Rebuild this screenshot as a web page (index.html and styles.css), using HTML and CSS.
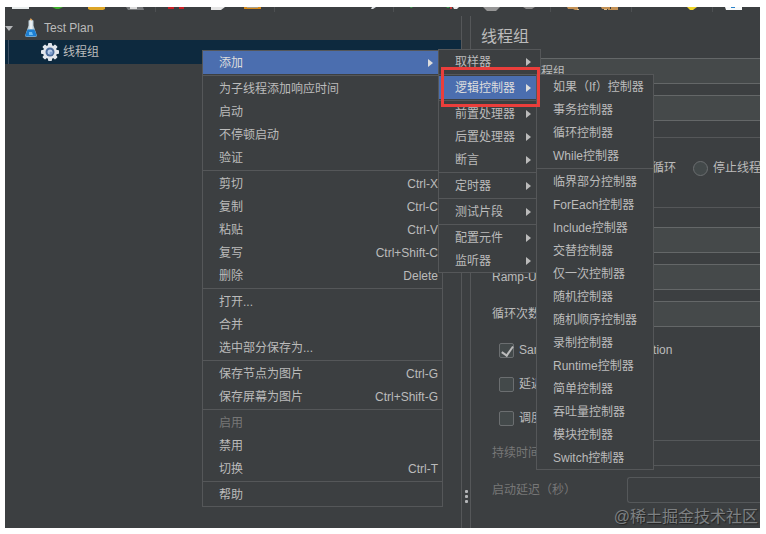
FILE: index.html
```html
<!DOCTYPE html>
<html lang="zh-CN">
<head>
    <meta charset="UTF-8">
    <meta name="viewport" content="width=device-width, initial-scale=1.0">
    <title>线程组</title>
    <link rel="stylesheet" href="styles.css">
</head>
<body>
    <div class="window">
        <!-- 工具栏 -->
        <div class="toolbar">
            <svg width="755" height="9" viewBox="5 7 755 9" aria-hidden="true">
                <path d="M12 7h17v2h-17z" fill="#e8ecec"/>
                <path d="M52 7h11l-4 2h-3z" fill="#3cae2a"/>
                <path d="M88 7h17v2l-2 1h-13l-2-1z" fill="#dda526"/>
                <path d="M126 7h17l1 3h-16z" fill="#77797b"/>
                <path d="M130 7h7v2h-7z" fill="#dcdcdc"/>
                <path d="M168 7h6v2h-6zM179 7h5v2h-5z" fill="#c81f25"/>
                <path d="M211 7h14l-4 3h-10z" fill="#e6e6e6"/>
                <path d="M244 7h17v2h-17z" fill="#d68b1c"/>
                <path d="M247 7h11v1h-11z" fill="#a9a08c"/>
                <path d="M372 7h4l-3 2h-2z" fill="#dfe3e5"/>
                <path d="M410 7h3l-2 1z" fill="#35b04a"/>
                <path d="M446 7h4l-2 1z" fill="#35b04a"/>
                <path d="M450 7h2v2h-2z" fill="#c43a3a"/>
                <path d="M453 7h6l-2 2h-3z" fill="#ececec"/>
                <path d="M483 7h17l-4 4h-9z" fill="#969696"/>
                <path d="M523 7h12l-3 2h-6z" fill="#8b8b8b"/>
                <path d="M567 7h11v3h-3l-2-1h-5zM601 7h9v2h-8zM611 7h7v3h-10v-1h3z" fill="#c39155"/>
                <path d="M577 9h2v1h-2zM604 9h3v1h-3z" fill="#e0bd85"/>
                <path d="M687 7h10l-4 3h-3z" fill="#efd528"/>
                <path d="M725 7h17v3h-16z" fill="#f8fafa"/>
                <path d="M731 7h4v1h-4z" fill="#2a82c9"/>
                <path d="M155 7h1v5h-1zM274 7h1v5h-1zM393 7h1v5h-1zM550 7h1v5h-1zM631 7h1v5h-1zM712 7h1v5h-1z" fill="#4d5052"/>
            </svg>
        </div>

        <div class="split">
            <!-- 测试计划树 -->
            <ul class="tree">
                <li class="tree-row">
                    <svg width="40" height="24" viewBox="0 0 40 24" aria-hidden="true">
                        <path d="M0 10h8l-4 5z" fill="#b4b6b8"/>
                        <path d="M23.500 4.500h5v5l3 9q1 2.500-2 2.500h-7q-3 0-2-2.500l3-9z" fill="#b9ccd6"/>
                        <path d="M24.500 4h3v9h-3z" fill="#e8eff2"/>
                        <path d="M22.500 13.500h7l2 5q.5 2-2 2h-7q-2.500 0-2-2z" fill="#1d7fd2"/>
                        <path d="M24 16h3l1 3h-4z" fill="#6cbcf2"/>
                        <path d="M25 3l2 1" stroke="#d9a05a" stroke-width="1.500"/>
                    </svg>
                    <span>Test Plan</span>
                </li>
                <li class="tree-row selected">
                    <svg class="gear" width="20" height="20" viewBox="-10 -10 20 20" aria-hidden="true">
                        <g fill="#e2e6ec">
                            <rect x="-2" y="-9" width="4" height="18" rx="1"/>
                            <rect x="-2" y="-9" width="4" height="18" rx="1" transform="rotate(45)"/>
                            <rect x="-2" y="-9" width="4" height="18" rx="1" transform="rotate(90)"/>
                            <rect x="-2" y="-9" width="4" height="18" rx="1" transform="rotate(135)"/>
                            <circle r="7"/>
                        </g>
                        <circle r="4.500" fill="#4c6d9c"/>
                        <circle r="2.500" fill="#b9cdea"/>
                        <circle cx="1" cy="1" r="1.500" fill="#7f9fd0"/>
                    </svg>
                    <span>线程组</span>
                </li>
            </ul>

            <div class="divider"><i></i><i></i><i></i></div>

            <!-- 线程组设置 -->
            <form class="panel">
                <h2>线程组</h2>
                <div class="field name-field">
                    <label for="name">名称：</label>
                    <input type="text" id="name" value="线程组">
                </div>
                <div class="field name-field">
                    <label for="comment">注释：</label>
                    <input type="text" id="comment">
                </div>

                <fieldset class="on-error">
                    <legend>在取样器错误后要执行的动作</legend>
                    <div class="radios">
                        <label><input type="radio" name="action">继续</label>
                        <label><input type="radio" name="action">启动下一进程循环</label>
                        <label><input type="radio" name="action">停止线程</label>
                    </div>
                </fieldset>

                <fieldset class="props">
                    <legend>线程属性</legend>
                    <div class="field">
                        <label for="threads">线程数：</label>
                        <input type="text" id="threads">
                    </div>
                    <div class="field">
                        <label for="ramp">Ramp-Up时间（秒）：</label>
                        <input type="text" id="ramp">
                    </div>
                    <div class="field">
                        <label for="loops">循环次数</label>
                        <input type="text" id="loops">
                    </div>
                    <div class="checks">
                        <label><input type="checkbox" checked>Same user on each&nbsp; iteration</label>
                        <label><input type="checkbox">延迟创建线程直到需要</label>
                        <label><input type="checkbox">调度器</label>
                    </div>
                    <div class="field disabled">
                        <label for="duration">持续时间（秒）</label>
                        <input type="text" id="duration" disabled>
                    </div>
                    <div class="field disabled">
                        <label for="delay">启动延迟（秒）</label>
                        <input type="text" id="delay" disabled>
                    </div>
                </fieldset>
            </form>
        </div>

        <!-- 右键菜单 -->
        <ul class="menu context-menu">
            <li class="has-sub active">
                <button type="button">添加</button>
                <ul class="menu add-menu">
                    <li class="has-sub"><button type="button">取样器</button></li>
                    <li class="sep"></li>
                    <li class="has-sub active">
                        <button type="button">逻辑控制器</button>
                        <ul class="menu logic-menu">
                            <li><button type="button">如果（If）控制器</button></li>
                            <li><button type="button">事务控制器</button></li>
                            <li><button type="button">循环控制器</button></li>
                            <li><button type="button">While控制器</button></li>
                            <li class="sep"></li>
                            <li><button type="button">临界部分控制器</button></li>
                            <li><button type="button">ForEach控制器</button></li>
                            <li><button type="button">Include控制器</button></li>
                            <li><button type="button">交替控制器</button></li>
                            <li><button type="button">仅一次控制器</button></li>
                            <li><button type="button">随机控制器</button></li>
                            <li><button type="button">随机顺序控制器</button></li>
                            <li><button type="button">录制控制器</button></li>
                            <li><button type="button">Runtime控制器</button></li>
                            <li><button type="button">简单控制器</button></li>
                            <li><button type="button">吞吐量控制器</button></li>
                            <li><button type="button">模块控制器</button></li>
                            <li><button type="button">Switch控制器</button></li>
                        </ul>
                        <div class="highlight"></div>
                    </li>
                    <li class="sep"></li>
                    <li class="has-sub"><button type="button">前置处理器</button></li>
                    <li class="has-sub"><button type="button">后置处理器</button></li>
                    <li class="has-sub"><button type="button">断言</button></li>
                    <li class="sep"></li>
                    <li class="has-sub"><button type="button">定时器</button></li>
                    <li class="sep"></li>
                    <li class="has-sub"><button type="button">测试片段</button></li>
                    <li class="sep"></li>
                    <li class="has-sub"><button type="button">配置元件</button></li>
                    <li class="has-sub"><button type="button">监听器</button></li>
                </ul>
            </li>
            <li class="sep"></li>
            <li><button type="button">为子线程添加响应时间</button></li>
            <li><button type="button">启动</button></li>
            <li><button type="button">不停顿启动</button></li>
            <li><button type="button">验证</button></li>
            <li class="sep"></li>
            <li><button type="button">剪切<kbd>Ctrl-X</kbd></button></li>
            <li><button type="button">复制<kbd>Ctrl-C</kbd></button></li>
            <li><button type="button">粘贴<kbd>Ctrl-V</kbd></button></li>
            <li><button type="button">复写<kbd>Ctrl+Shift-C</kbd></button></li>
            <li><button type="button">删除<kbd>Delete</kbd></button></li>
            <li class="sep"></li>
            <li><button type="button">打开...</button></li>
            <li><button type="button">合并</button></li>
            <li><button type="button">选中部分保存为...</button></li>
            <li class="sep"></li>
            <li><button type="button">保存节点为图片<kbd>Ctrl-G</kbd></button></li>
            <li><button type="button">保存屏幕为图片<kbd>Ctrl+Shift-G</kbd></button></li>
            <li class="sep"></li>
            <li><button type="button" disabled>启用</button></li>
            <li><button type="button">禁用</button></li>
            <li><button type="button">切换<kbd>Ctrl-T</kbd></button></li>
            <li class="sep"></li>
            <li><button type="button">帮助</button></li>
        </ul>

        <div class="watermark">@稀土掘金技术社区</div>
    </div>
</body>
</html>
```
FILE: styles.css
```css
* {
    box-sizing: border-box;
}
body {
    margin: 0;
    padding: 7px 6px 6px 5px;
    min-height: 100vh;
    display: flex;
    background-color: #fff;
    color: #bbb;
    font-family: "Liberation Sans", "Noto Sans CJK SC", sans-serif;
    font-size: 12px;
    line-height: 16px;
}
ul {
    list-style: none;
    margin: 0;
    padding: 0;
}
button, input {
    font: inherit;
    color: inherit;
}
.window {
    position: relative;
    flex: 1;
    min-width: 0;
    display: flex;
    flex-direction: column;
    background-color: #3c3f41;
    overflow: hidden;
}
.toolbar {
    height: 9px;
    overflow: hidden;
}
.toolbar svg {
    display: block;
}
.split {
    flex: 1;
    display: flex;
}

/* 左侧树 */
.tree {
    flex: 0 0 456px;
}
.tree-row {
    display: flex;
    align-items: center;
    height: 24px;
}
.tree-row svg {
    flex: none;
    margin-right: -1px;
}
.tree-row.selected {
    background-color: #0d293e;
    border-left: 1px solid #3c5064;
    margin-left: 3px;
    box-shadow: -3px 0 #0d293e;
}
.tree-row .gear {
    margin: 0 3px 0 31px;
}
.divider {
    flex: 0 0 10px;
    display: flex;
    flex-direction: column;
    justify-content: flex-end;
    align-items: center;
    gap: 2px;
    padding-bottom: 25px;
    border-left: 1px solid #555759;
    border-right: 1px solid #555759;
}
.divider i {
    width: 3px;
    height: 3px;
    border-radius: 1px;
    background-color: #b4b6b8;
}

/* 右侧面板 */
.panel {
    flex: 1;
    min-width: 0;
    padding: 9px 0 0 10px;
    white-space: nowrap;
}
h2 {
    margin: 0 0 9px;
    font-size: 16px;
    font-weight: normal;
    line-height: 24px;
}
.field {
    display: grid;
    grid-template-columns: 135px 1fr;
    align-items: center;
    margin-bottom: 11px;
}
.name-field {
    grid-template-columns: 44px 1fr;
}
.field input {
    width: 100%;
    min-width: 0;
    height: 26px;
    padding: 0 3px 2px;
    border: 1px solid #646768;
    border-right: none;
    border-radius: 3px 0 0 3px;
    background-color: #45494a;
}
.disabled {
    color: #777;
}
.disabled input {
    border-color: #55585a;
    background-color: #3c3f41;
}
fieldset {
    min-width: 0;
    margin: 0;
    padding: 0 0 0 11px;
    border: 0;
    border-top: 1px solid #555759;
}
legend {
    margin-left: -11px;
    padding: 0 4px 0 0;
}
.on-error {
    margin-top: -3px;
}
.radios {
    display: flex;
    gap: 17px;
    padding: 15px 0 23px 7px;
}
.radios label, .checks label {
    display: flex;
    align-items: center;
    gap: 5px;
}
.radios input, .checks input {
    appearance: none;
    position: relative;
    flex: none;
    width: 15px;
    height: 15px;
    margin: 0;
    border: 1px solid #6b6e70;
    border-radius: 2px;
    background-color: #43494a;
}
.radios input {
    border-radius: 50%;
}
.props legend {
    margin-bottom: 12px;
}
.checks {
    margin: -5px 0 5px 7px;
}
.checks label {
    height: 34px;
}
.checks input:checked::after {
    content: "";
    position: absolute;
    left: 4px;
    top: 0;
    width: 5px;
    height: 10px;
    border: solid #bbb;
    border-width: 0 2px 2px 0;
    transform: rotate(35deg);
}

/* 菜单 */
.menu {
    position: absolute;
    border: 1px solid #555759;
    background-color: #3c3f41;
}
.menu li {
    position: relative;
}
.menu .menu {
    left: calc(100% - 4px);
    top: -2px;
    z-index: 1;
}
.menu button {
    display: flex;
    justify-content: space-between;
    align-items: center;
    width: 100%;
    height: 23px;
    padding: 0 4px 0 16px;
    border: none;
    background: none;
    text-align: left;
    white-space: nowrap;
}
.menu button:disabled {
    color: #777;
}
.menu .active > button {
    background-color: #4b6eaf;
    color: #ddd;
}
.has-sub > button::after {
    content: "";
    margin-right: 5px;
    border-left: 5px solid;
    border-top: 4px solid transparent;
    border-bottom: 4px solid transparent;
}
.menu .sep {
    height: 3px;
    border: solid #3c3f41;
    border-width: 1px 0;
    background-color: #555759;
}
kbd {
    font: inherit;
}
.context-menu {
    left: 197px;
    top: 43px;
    width: 241px;
}
.add-menu {
    width: 103px;
}
.logic-menu {
    width: 118px;
}
.highlight {
    position: absolute;
    z-index: 2;
    inset: -9px 0 -8px 2px;
    border: 3px solid #ea3e3b;
    pointer-events: none;
}
.watermark {
    position: absolute;
    right: 2px;
    bottom: 1px;
    color: #7d8082;
    font-size: 16px;
    line-height: 20px;
    text-shadow: 1px 1px 1px #222;
}
```
